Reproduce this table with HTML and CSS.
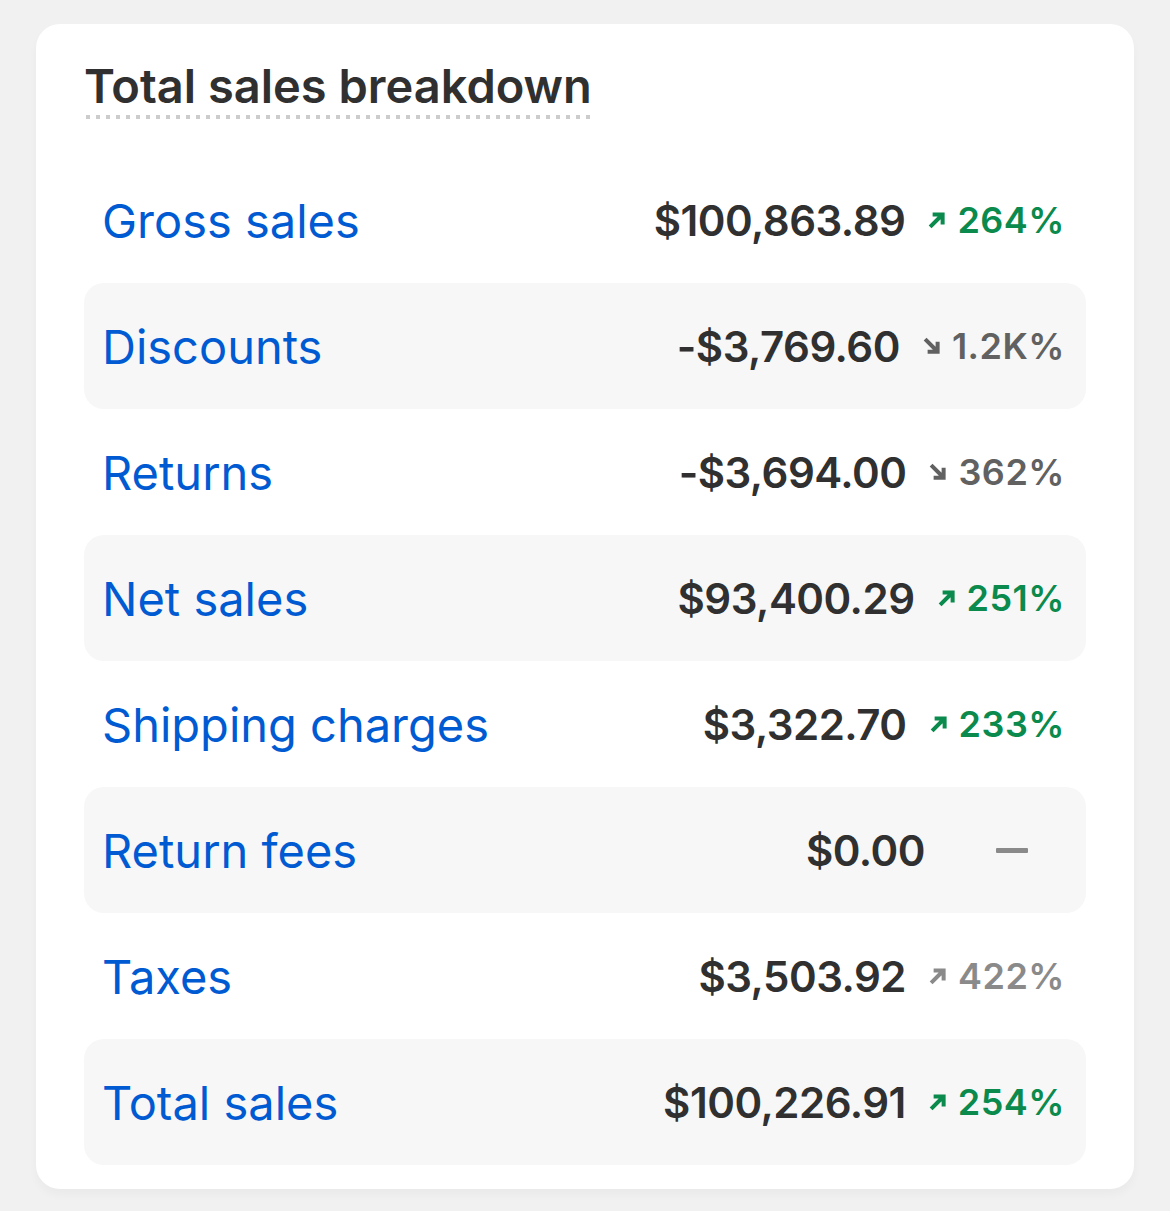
FILE: index.html
```html
<!DOCTYPE html>
<html>
<head>
  <title>Total sales breakdown</title>
  <link rel="stylesheet" href="styles.css">
</head>
<body>

  <div class="card">
    <h2 class="card-title"><span>Total sales breakdown</span></h2>

    <div class="rows">
      <div class="row">
        <span class="label">Gross sales</span>
        <span class="value">$100,863.89</span>
        <span class="change up">
          <svg viewBox="0 0 16 16"><path d="M2.5 13.5L12 4M4.5 3.5H12.5V11.5"/></svg>264%
        </span>
      </div>
      <div class="row shaded">
        <span class="label">Discounts</span>
        <span class="value">-$3,769.60</span>
        <span class="change down">
          <svg viewBox="0 0 16 16"><path d="M2.5 2.5L12 12M4.5 12.5H12.5V4.5"/></svg>1.2K%
        </span>
      </div>
      <div class="row">
        <span class="label">Returns</span>
        <span class="value">-$3,694.00</span>
        <span class="change down">
          <svg viewBox="0 0 16 16"><path d="M2.5 2.5L12 12M4.5 12.5H12.5V4.5"/></svg>362%
        </span>
      </div>
      <div class="row shaded">
        <span class="label">Net sales</span>
        <span class="value">$93,400.29</span>
        <span class="change up">
          <svg viewBox="0 0 16 16"><path d="M2.5 13.5L12 4M4.5 3.5H12.5V11.5"/></svg>251%
        </span>
      </div>
      <div class="row">
        <span class="label">Shipping charges</span>
        <span class="value">$3,322.70</span>
        <span class="change up">
          <svg viewBox="0 0 16 16"><path d="M2.5 13.5L12 4M4.5 3.5H12.5V11.5"/></svg>233%
        </span>
      </div>
      <div class="row shaded">
        <span class="label">Return fees</span>
        <span class="value">$0.00</span>
        <span class="change none"><span class="dash"></span></span>
      </div>
      <div class="row">
        <span class="label">Taxes</span>
        <span class="value">$3,503.92</span>
        <span class="change muted">
          <svg viewBox="0 0 16 16"><path d="M2.5 13.5L12 4M4.5 3.5H12.5V11.5"/></svg>422%
        </span>
      </div>
      <div class="row shaded">
        <span class="label">Total sales</span>
        <span class="value">$100,226.91</span>
        <span class="change up">
          <svg viewBox="0 0 16 16"><path d="M2.5 13.5L12 4M4.5 3.5H12.5V11.5"/></svg>254%
        </span>
      </div>
    </div>
  </div>

</body>
</html>
```

FILE: styles.css
```css
body {
  margin: 0;
  padding: 24px 36px 20px;
  background: #f1f1f1;
  font-family: Inter, "Noto Sans", sans-serif;
  color: #303030;
}

.card {
  background: #ffffff;
  border-radius: 24px;
  padding: 34px 48px 24px;
  box-shadow: 0 6px 10px rgba(0, 0, 0, 0.03);
}

.card-title {
  margin: 0 0 38px;
  font-size: 47px;
  font-weight: 600;
  line-height: 56px;
  color: #303030;
}

.card-title span {
  display: inline-block;
  padding-bottom: 5px;
  background-image: linear-gradient(to right, #cccccc 4px, transparent 4px);
  background-size: 10px 4px;
  background-repeat: repeat-x;
  background-position: 2px bottom;
}

.row {
  display: flex;
  align-items: center;
  height: 126px;
  padding: 0 21px 0 18px;
  border-radius: 20px;
}

.row.shaded {
  background: #f7f7f7;
}

.label {
  flex: 1;
  font-size: 47px;
  color: #005bd3;
}

.value {
  font-size: 42px;
  font-weight: 600;
  color: #303030;
  letter-spacing: -0.5px;
}

.change {
  display: flex;
  align-items: center;
  gap: 10px;
  margin-left: 22px;
  font-size: 36px;
  font-weight: 600;
  letter-spacing: 0.5px;
}

.change svg {
  flex: none;
  width: 20px;
  height: 20px;
  fill: none;
  stroke: currentColor;
  stroke-width: 3.2;
}

.change.up {
  color: #0a8a4c;
}

.change.down {
  color: #616161;
}

.change.muted {
  color: #8a8a8a;
}

.change.none {
  width: 118px;
  justify-content: center;
}

.dash {
  display: block;
  width: 32px;
  height: 5px;
  margin-left: 12px;
  border-radius: 1px;
  background: #8a8a8a;
}
```
